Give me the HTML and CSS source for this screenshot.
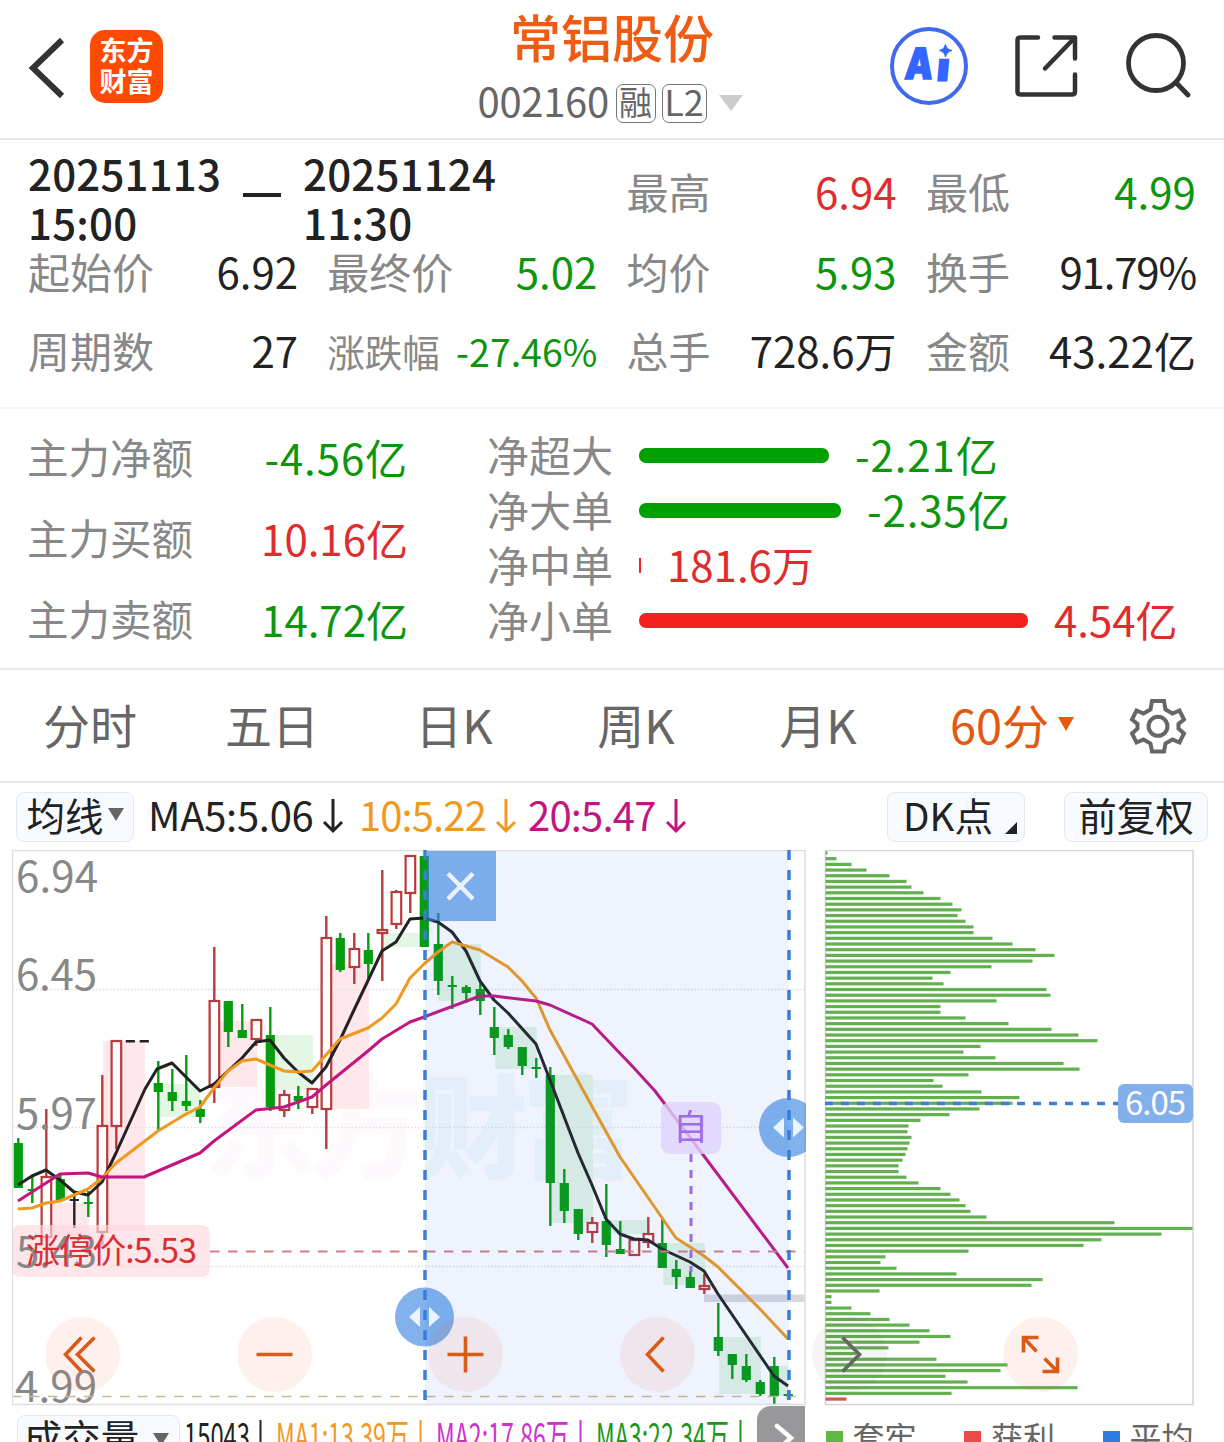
FILE: index.html
```html
<!DOCTYPE html>
<html lang="zh-CN">
<head>
    <meta charset="UTF-8">
    <meta name="viewport" content="width=device-width, initial-scale=1.0">
    <title>常铝股份 002160</title>
    <link rel="stylesheet" href="styles.css">
</head>
<body>
    <header class="topbar">
        <div class="left">
            <svg class="back" width="40" height="64" viewBox="0 0 40 64"><path d="M35 5 L6 33 L35 61" fill="none" stroke="#333" stroke-width="6"/></svg>
            <div class="logo"><span>东方</span><span>财富</span></div>
        </div>
        <div class="title">
            <h1>常铝股份</h1>
            <div class="code">
                <span class="num">002160</span>
                <span class="tag">融</span>
                <span class="tag l2">L2</span>
                <i class="tri"></i>
            </div>
        </div>
        <div class="icons">
            <svg width="80" height="80" viewBox="889 26.5 80 80">
                <circle cx="929" cy="66.5" r="37" fill="none" stroke="#4169ee" stroke-width="4"/>
                <g class="ai" fill="#3366ff" stroke="#3366ff" transform="translate(929 0) skewX(-5) translate(-929 0)">
                    <text x="911" y="80" textLength="28" lengthAdjust="spacingAndGlyphs">A</text>
                    <text x="944" y="81">ı</text>
                </g>
                <path d="M945.500 45 Q946.500 50 952 51 Q946.500 52 945.500 57.500 Q944.500 52 939.500 51 Q944.500 50 945.500 45Z" fill="#3366ff" stroke="#3366ff"/>
            </svg>
            <svg width="66" height="66" viewBox="1013 33.500 66 66" fill="none" stroke="#333" stroke-width="4.500" stroke-linecap="round" stroke-linejoin="round">
                <path d="M1038 38 H1020 Q1017.500 38 1017.500 41 V92 Q1017.500 95 1020.500 95 H1072 Q1075 95 1075 92 V75"/>
                <path d="M1054.500 38 H1075 V59 M1074 39 L1045 69"/>
            </svg>
            <svg width="70" height="70" viewBox="1124 31.500 70 70" fill="none" stroke="#333" stroke-width="4.800" stroke-linecap="round">
                <circle cx="1157" cy="63.500" r="27.500"/>
                <path d="M1177 83 L1189 95.500"/>
            </svg>
        </div>
    </header>

    <section class="stats">
        <div class="range">
            <div>20251113<br>15:00</div>
            <i></i>
            <div>20251124<br>11:30</div>
        </div>
        <div class="cell"><span>最高</span><b class="red">6.94</b></div>
        <div class="cell"><span>最低</span><b class="green">4.99</b></div>
        <div class="cell"><span>起始价</span><b>6.92</b></div>
        <div class="cell"><span>最终价</span><b class="green">5.02</b></div>
        <div class="cell"><span>均价</span><b class="green">5.93</b></div>
        <div class="cell"><span>换手</span><b class="tight">91.79%</b></div>
        <div class="cell"><span>周期数</span><b>27</b></div>
        <div class="cell small"><span>涨跌幅</span><b class="green">-27.46%</b></div>
        <div class="cell"><span>总手</span><b>728.6万</b></div>
        <div class="cell"><span>金额</span><b>43.22亿</b></div>
    </section>

    <section class="funds">
        <div class="main-force">
            <div class="cell"><span>主力净额</span><b class="green neg">-4.56亿</b></div>
            <div class="cell"><span>主力买额</span><b class="red">10.16亿</b></div>
            <div class="cell"><span>主力卖额</span><b class="green">14.72亿</b></div>
        </div>
        <div class="orders">
            <div class="order green"><span>净超大</span><i style="width:190px"></i><b class="neg">-2.21亿</b></div>
            <div class="order green"><span>净大单</span><i style="width:202px"></i><b class="neg">-2.35亿</b></div>
            <div class="order red"><span>净中单</span><i class="thin" style="width:2px"></i><b>181.6万</b></div>
            <div class="order red"><span>净小单</span><i style="width:389px"></i><b>4.54亿</b></div>
        </div>
    </section>

    <nav class="tabs">
        <a>分时</a>
        <a>五日</a>
        <a>日K</a>
        <a>周K</a>
        <a>月K</a>
        <a class="active">60分<i></i></a>
        <svg width="60" height="60" viewBox="1128 695 60 60" fill="none" stroke="#666" stroke-width="4">
            <path d="M1152 700 H1164 L1165.500 708.500 L1172.500 712.500 L1179.500 709.500 L1184 718.500 L1178.500 723 V727.500 L1184 732.500 L1179.500 741.500 L1172.500 738.500 L1165.500 742.500 L1164 750.500 H1152 L1150.500 742.500 L1143.500 738.500 L1136.500 741.500 L1132 732.500 L1137.500 727.500 V723 L1132 718.500 L1136.500 709.500 L1143.500 712.500 L1150.500 708.500 Z"/>
            <circle cx="1158" cy="725.300" r="9.500"/>
        </svg>
    </nav>

    <div class="toolbar">
        <div class="pill">均线<i class="down"></i></div>
        <div class="ma ma5">MA5:5.06<svg width="22" height="36" viewBox="0 0 22 36"><path d="M11 1 V33 M2 24 L11 33 L20 24"/></svg></div>
        <div class="ma ma10">10:5.22<svg width="22" height="36" viewBox="0 0 22 36"><path d="M11 1 V33 M2 24 L11 33 L20 24"/></svg></div>
        <div class="ma ma20">20:5.47<svg width="22" height="36" viewBox="0 0 22 36"><path d="M11 1 V33 M2 24 L11 33 L20 24"/></svg></div>
        <div class="pill dk">DK点<i class="corner"></i></div>
        <div class="pill fq">前复权</div>
    </div>

    <div class="charts">
        <svg id="kline" width="794" height="556" viewBox="12 850 794 556">
            <text class="watermark" x="204" y="1170" textLength="430">东方<tspan>财富</tspan></text>
            <g id="blocks"></g>
            <g class="grid">
                <path d="M12 989.500 H805 M12 1127.500 H805 M12 1266.500 H805"/>
            </g>
            <g id="candles"></g>
            <rect x="704" y="1294.500" width="101" height="7.500" fill="#d8d8df"/>
            <rect x="12" y="1225" width="198" height="52" rx="8" fill="#ffd9df" fill-opacity=".65"/>
            <g class="axis">
                <text x="16" y="892" textLength="82">6.94</text>
                <text x="16" y="990" textLength="81">6.45</text>
                <text x="16" y="1129" textLength="81">5.97</text>
                <text x="16" y="1267" textLength="81">5.43</text>
                <text x="15" y="1402" textLength="82">4.99</text>
            </g>
            <g id="lines"></g>
            <path d="M210 1251.500 H805" stroke="#cf7f85" stroke-width="2" stroke-dasharray="9.500 8.500"/>
            <path d="M12 1396.500 H805" stroke="#cdb791" stroke-width="1.500" stroke-dasharray="9.500 8.500"/>
            <text class="limit" x="26" y="1263" textLength="171">涨停价:5.53</text>
            <rect x="425" y="850" width="364" height="555" fill="#3c70f5" fill-opacity=".085"/>
            <rect x="661" y="1102" width="60" height="52" rx="9" fill="#dfd3fb" fill-opacity=".8"/>
            <text class="zi" x="673" y="1140">自</text>
            <path d="M691 1154 V1272" stroke="#9d6ae4" stroke-width="3" stroke-dasharray="8 8"/>
            <path d="M12.500 850.500 H805 V1404.500 H12.500 Z" fill="none" stroke="#dedede" stroke-width="1.500"/>
            <rect x="427" y="851" width="69" height="70" fill="#2f7de0" fill-opacity=".6"/>
            <path d="M448 873.500 L473 899 M473 873.500 L448 899" stroke="#eaf2ff" stroke-width="4.500"/>
            <g id="handles"></g>
        </svg>
        <svg id="chips" width="370" height="556" viewBox="824 850 370 556">
            <path d="M825.500 850.500 H1193 V1404.500 H825.500 Z" fill="none" stroke="#d3d3d3" stroke-width="1.500"/>
            <g id="bars"></g>
            <path d="M825 1103.500 H1118" stroke="#3f7fd0" stroke-width="3.500" stroke-dasharray="8 8"/>
            <rect x="1118" y="1084" width="75" height="39" rx="6" fill="#83b0eb"/>
            <text class="avg" x="1125" y="1115" textLength="61">6.05</text>
        </svg>
        <div class="controls">
            <svg viewBox="-37.500 -37.500 75 75"><circle r="37.500"/><path d="M-1 -17 L-17 0 L-1 17 M12 -17 L-5 0 L12 17"/></svg>
            <svg viewBox="-37.500 -37.500 75 75"><circle r="37.500"/><path d="M-18 0 H18"/></svg>
            <svg viewBox="-37.500 -37.500 75 75"><circle r="37.500"/><path d="M-18 0 H18 M0 -18 V18"/></svg>
            <svg viewBox="-37.500 -37.500 75 75"><circle r="37.500"/><path d="M6 -17 L-10 0 L6 17"/></svg>
            <svg class="off" viewBox="-37.500 -37.500 75 75"><circle r="37.500"/><path d="M-7 -17 L10 0 L-7 17"/></svg>
            <svg viewBox="-37.500 -37.500 75 75"><circle r="37.500"/><path d="M-17 -2 V-17 H-2 M-17 -17 L-4 -3 M17 3 V17 H2 M17 17 L4 4"/></svg>
        </div>
    </div>

    <footer>
        <div class="pill vol">成交量<i class="down"></i></div>
        <svg class="vol-ma" width="572" height="37" viewBox="185 1405 572 37">
            <g fill="#222"><text x="184" y="1450" textLength="66" lengthAdjust="spacingAndGlyphs">15043</text><path d="M259.500 1419h2v23h-2z"/></g>
            <g fill="#ef9a26"><text x="276" y="1450" textLength="133" lengthAdjust="spacingAndGlyphs">MA1:13.39万</text><path d="M419.500 1419h2v23h-2z"/></g>
            <g fill="#cc33cc"><text x="436" y="1450" textLength="133" lengthAdjust="spacingAndGlyphs">MA2:17.86万</text><path d="M579.500 1419h2v23h-2z"/></g>
            <g fill="#1a971a"><text x="596" y="1450" textLength="133" lengthAdjust="spacingAndGlyphs">MA3:22.34万</text><path d="M739.500 1419h2v23h-2z"/></g>
        </svg>
        <div class="next"><svg width="24" height="36" viewBox="0 0 24 36"><path d="M6 20 L20 32 L6 44" fill="none" stroke="#fff" stroke-width="4.500" stroke-linecap="round"/></svg></div>
        <div class="legend">
            <span><i class="g"></i>套牢</span>
            <span><i class="r"></i>获利</span>
            <span><i class="b"></i>平均</span>
        </div>
    </footer>

    <script>
        const RED = "#b93a3a", GREEN = "#069c10", BLACK = "#222";

        // [最高, 最低, 实体上沿, 实体下沿, 类型]  g 跌, r 涨, k 平
        const candles = [
            [1138,1188,1143,1188,"g"],[1177,1203,1189,1191,"g"],[1109,1237,1177,1237,"r"],[1174,1200,1179,1200,"g"],
            [1192,1228,1199,1201,"k"],[1191,1217,1202,1204,"g"],[1075,1245,1126,1232,"r"],[1040,1149,1041,1126,"r"],
            [1041,1041,1040,1042.5,"k"],[1041,1041,1040,1042.5,"k"],[1061,1131,1083,1092,"g"],[1069,1111,1092,1101,"g"],
            [1055,1111,1101,1106,"g"],[1100,1123,1109,1117,"g"],[947,1103,1001,1087,"r"],[1001,1047,1001,1032,"g"],
            [1004,1038,1030,1038,"g"],[1020,1046,1020,1039,"r"],[1007,1111,1035,1107,"g"],[1090,1117,1095,1110,"r"],
            [1086,1109,1096,1101,"g"],[1089,1114,1089,1107,"r"],[916,1149,938,1109,"r"],[933,972,938,970,"g"],
            [933,984,949,967,"r"],[933,978,950,964,"g"],[870,981,930,933,"r"],[890,929,892,924,"r"],
            [855,913,856,893,"r"],[856,946,856,947,"g"],[913,995,944,981,"g"],[976,1009,985,987,"g"],
            [985,1003,987,993,"g"],[982,1015,989,1001,"g"],[1007,1055,1027,1038,"g"],[1029,1049,1035,1047,"g"],
            [1047,1075,1047,1066,"g"],[1058,1078,1067,1069,"g"],[1067,1226,1075,1183,"g"],[1169,1223,1183,1211,"g"],
            [1209,1240,1209,1234,"g"],[1217,1243,1223,1232,"r"],[1184,1257,1221,1245,"g"],[1221,1254,1249,1254,"g"],
            [1240,1255,1240,1255,"r"],[1217,1248,1234,1242,"r"],[1218,1268,1243,1268,"g"],[1260,1289,1269,1277,"g"],
            [1271,1288,1277,1288,"g"],[1274,1294,1286,1289,"r"],[1303,1356,1337,1351,"g"],[1354,1379,1354,1365,"g"],
            [1354,1382,1366,1380,"g"],[1380,1396,1382,1394,"g"],[1357,1405,1366,1396,"g"],[1390,1400,1394,1396,"g"]
        ];

        let html = "";
        candles.forEach(([high, low, top, bottom, type], i) => {
            const x = 18.3 + i * 14;
            const color = type == "r" ? RED : type == "g" ? GREEN : BLACK;
            if (type == "r") {
                html += `<path d="M${x} ${high} V${top} M${x} ${bottom} V${low}" stroke="${color}" stroke-width="2.4"/>`;
                html += `<rect x="${x - 4.7}" y="${top}" width="9.6" height="${bottom - top}" fill="#fff" fill-opacity=".85" stroke="${color}" stroke-width="2.2"/>`;
            } else {
                html += `<path d="M${x} ${high} V${low}" stroke="${color}" stroke-width="2.4"/>`;
                html += `<rect x="${x - 4.6}" y="${top}" width="9.2" height="${bottom - top}" fill="${color}"/>`;
            }
        });
        document.getElementById("candles").innerHTML = html;

        // 背景色块 [x1, y1, x2, y2, 颜色]
        const P = "#ffe8ec", G = "#e4f6e4";
        const blocks = [
            [50,1203,89,1237,P],[103,1041,145,1231,P],[158,1084,200,1117,G],[214,1021,257,1087,P],[270,1035,313,1090,G],
            [326,964,369,1109,P],[382,933,424,947,G],[438,944,481,1001,G],[495,1027,537,1069,G],[550,1075,593,1223,G],
            [606,1220,648,1234,G],[663,1243,705,1285,G],[719,1337,761,1394,G],[774,1366,788,1396,G]
        ];
        document.getElementById("blocks").innerHTML = blocks.map(([a, b, c, d, color]) =>
            `<rect x="${a}" y="${b}" width="${c - a}" height="${d - b}" fill="${color}"/>`).join("");

        // 均线
        const lines = {
            "#222": "18,1185 32,1176 46,1170 60,1180 74,1192 88,1195 102,1182 116,1153 145,1089 157,1069 172,1063 186,1077 200,1091 214,1084 228,1071 242,1058 256,1042 270,1040 284,1058 298,1072 312,1083 326,1067 340,1040 354,1010 382,951 396,942 410,919 424,918 438,922 452,932 466,951 480,981 494,1000 508,1013 536,1044 550,1080 578,1153 592,1185 606,1219 620,1234 634,1239 648,1240 662,1249 690,1262 704,1271 718,1294 774,1376 788,1386",
            "#ef9a1f": "18,1209 32,1208 46,1203 60,1201 74,1195 88,1189 102,1178 116,1163 158,1131 186,1114 200,1107 214,1088 228,1071 242,1061 256,1059 284,1071 298,1072 312,1071 326,1055 340,1039 368,1028 382,1018 396,1004 410,978 424,964 438,952 452,942 480,950 508,967 522,981 536,998 550,1030 594,1110 620,1157 676,1238 704,1256 718,1267 760,1309 788,1339",
            "#c3157f": "18,1201 46,1183 60,1174 88,1173 102,1177 144,1177 158,1171 200,1153 214,1141 256,1110 284,1107 312,1097 326,1085 368,1051 382,1039 410,1022 424,1017 480,996 494,996 536,1001 550,1005 592,1024 634,1068 655,1091 692,1140 788,1268"
        };
        document.getElementById("lines").innerHTML = Object.entries(lines).map(([color, points]) =>
            `<polyline points="${points}" fill="none" stroke="${color}" stroke-width="3" stroke-linejoin="round"/>`).join("");

        // 区间手柄
        document.getElementById("handles").innerHTML = [[425, 1317], [789, 1127.5]].map(([x, y]) =>
            `<circle cx="${x - 0.5}" cy="${y}" r="29.500" fill="#2f7de0" fill-opacity=".6"/>
            <path d="M${x - 16} ${y} l11 -10 v20z M${x + 15} ${y} l-11 -10 v20z" fill="#eaf4ff"/>
            <path d="M${x} 850 V1404" stroke="#3a7fd3" stroke-width="3.500" stroke-dasharray="10 10"/>`).join("");

        // 筹码分布
        const chips = [2,11,26,41,64,81,86,98,115,127,136,132,140,148,148,167,187,210,229,207,166,125,107,118,221,225,171,115,115,140,
            183,226,253,272,155,138,170,238,254,143,108,117,156,194,187,154,124,95,83,82,86,84,82,80,77,73,73,81,93,115,
            125,134,140,145,161,289,367,336,276,258,143,60,55,71,131,217,206,54,6,6,26,45,64,84,104,125,94,63,
            31,111,182,175,120,142,252,126,21];
        document.getElementById("bars").innerHTML = chips.map((w, i) =>
            `<rect x="825.500" y="${851.4 + i * 5.688}" width="${w}" height="3.200" fill="${i == 96 ? "#d65555" : "#62b04f"}"/>`).join("");
    </script>
</body>
</html>
```
FILE: styles.css
```css
* {
    box-sizing: border-box;
}
body {
    margin: 0;
    width: 1224px;
    height: 1442px;
    overflow: hidden;
    background: #fff;
    color: #222;
    font-family: "Noto Sans CJK SC", sans-serif;
    font-size: 42px;
    line-height: 1;
}
i {
    display: block;
    font-style: normal;
}
b {
    font-weight: 400;
}
svg {
    display: block;
    flex: none;
}
.red {
    color: #df2c2c;
}
.green {
    color: #0c960c;
}
.tight {
    letter-spacing: -1.200px;
}
.neg {
    letter-spacing: 0.900px;
}

/* 顶部 */
.topbar {
    display: grid;
    grid-template-columns: 1fr 270px 1fr;
    height: 140px;
    border-bottom: 2px solid #e8e8e8;
}
.left {
    display: flex;
    align-items: center;
    padding: 0 0 5px 27px;
}
.logo {
    display: flex;
    flex-direction: column;
    justify-content: center;
    align-items: center;
    width: 73px;
    height: 73px;
    margin-left: 23px;
    padding-bottom: 3px;
    border-radius: 15px;
    background: #ff4a05;
    color: #fff;
    font-size: 27px;
    font-weight: 700;
    line-height: 31px;
}
.title {
    display: flex;
    flex-direction: column;
    align-items: center;
}
.title h1 {
    margin: 0;
    padding-top: 3px;
    color: #ee5b12;
    font-size: 51px;
    font-weight: 500;
    line-height: 66px;
}
.code {
    display: flex;
    align-items: center;
    height: 40px;
    margin-top: 14px;
    color: #666;
    margin-left: -4px;
}
.code .num {
    width: 138px;
    margin-bottom: 6px;
    font-size: 40px;
    letter-spacing: -0.300px;
}
.tag {
    width: 40px;
    height: 39px;
    margin-right: 6px;
    border: 1.500px solid #777;
    border-radius: 7px;
    font-size: 33px;
    line-height: 32px;
    text-align: center;
}
.tag.l2 {
    width: 45px;
    font-size: 36px;
    line-height: 31px;
}
.tri {
    margin-left: 6px;
    border: 12px solid transparent;
    border-top: 16px solid #ccc;
    border-bottom: 0;
}
.icons {
    display: flex;
    align-items: center;
    justify-content: flex-end;
    padding: 0 31px 6px 0;
    gap: 44px;
}
.ai text {
    font-family: "Inter", sans-serif;
    font-size: 43px;
    font-weight: 900;
    stroke-width: 1.500;
}
.ai text + text {
    font-size: 36px;
    stroke-width: 3;
}

/* 区间统计 */
.stats {
    display: grid;
    grid-template-columns: repeat(4, 270px);
    grid-template-rows: repeat(3, 79.500px);
    column-gap: 29.300px;
    height: 269px;
    padding: 13px 28px 0;
    border-bottom: 2px solid #f5f5f5;
}
.range {
    grid-column: span 2;
    display: flex;
    height: 98px;
    margin-top: -5px;
    font-weight: 500;
    line-height: 49px;
    letter-spacing: 0.200px;
}
.range i {
    width: 38px;
    height: 4px;
    margin: 45px 22px 0 23px;
    background: #222;
}
.range div {
    width: 192px;
}
.cell {
    display: flex;
    align-items: center;
    justify-content: space-between;
    padding-bottom: 3px;
    white-space: nowrap;
}
.cell span {
    color: #888;
}
.cell.small {
    font-size: 37.500px;
}

/* 资金 */
.funds {
    display: flex;
    height: 261px;
    border-bottom: 2px solid #e8eaec;
}
.main-force {
    width: 408px;
    padding: 9px 0 0 27px;
}
.main-force .cell {
    height: 81px;
}
.main-force span {
    font-size: 41.500px;
}
.orders {
    padding: 19px 0 0 79px;
}
.order {
    display: flex;
    align-items: center;
    height: 55px;
    white-space: nowrap;
}
.order span {
    width: 152px;
    margin-bottom: 3px;
    color: #888;
}
.order b {
    margin-bottom: 3px;
}
.order i {
    height: 15px;
    margin-right: 26px;
    border-radius: 7px;
    background: #00a000;
}
.order.red i {
    background: #f52020;
}
.order i.thin {
    border-radius: 0;
}

/* 周期 */
.tabs {
    display: flex;
    align-items: center;
    height: 113px;
    border-bottom: 2px solid #e8e8e8;
    color: #666;
    font-size: 47px;
}
.tabs a {
    width: 182px;
    padding: 0 2px 4px 0;
    text-align: center;
}
.tabs a.active {
    display: flex;
    align-items: center;
    justify-content: center;
    width: 204px;
    margin-right: 14px;
    padding-right: 0;
    color: #e2590f;
}
.tabs a.active i {
    margin-left: 9px;
    border: 8px solid transparent;
    border-top: 14px solid #e9560c;
    border-bottom: 0;
}

/* 指标栏 */
.toolbar {
    display: flex;
    align-items: center;
    height: 67px;
    padding: 0 16px;
    font-size: 40px;
}
.pill {
    display: flex;
    align-items: center;
    justify-content: center;
    width: 118px;
    height: 50px;
    padding-bottom: 4px;
    border: 1.500px solid #e6e8f0;
    border-radius: 8px;
    background: #f7faff;
    font-size: 38.500px;
}
.pill .down {
    margin-left: 4px;
    border: 8px solid transparent;
    border-top: 13px solid #666;
    border-bottom: 0;
}
.ma {
    display: flex;
    align-items: center;
    height: 50px;
    padding-bottom: 5px;
}
.ma svg {
    margin: 3px 0 0 9px;
    fill: none;
    stroke: currentColor;
    stroke-width: 3;
}
.ma5 {
    width: 211px;
    margin-left: 14px;
    letter-spacing: -0.300px;
}
.ma10 {
    width: 169px;
    color: #ef9a1f;
    letter-spacing: -0.900px;
}
.ma20 {
    color: #c3157f;
    letter-spacing: -0.800px;
}
.pill.dk {
    position: relative;
    width: 138px;
    margin-left: auto;
    padding-right: 16px;
}
.corner {
    position: absolute;
    right: 7px;
    bottom: 7px;
    border-left: 12px solid transparent;
    border-bottom: 12px solid #222;
}
.pill.fq {
    width: 144px;
    margin-left: 39px;
}

/* 图表 */
.charts {
    position: relative;
    display: flex;
    gap: 18px;
    height: 556px;
    padding-left: 12px;
}
.watermark {
    font-size: 112px;
    font-weight: 900;
    fill: #fef9fd;
}
.watermark tspan {
    fill: #f5faf9;
}
.grid path {
    fill: none;
    stroke: #ddd;
    stroke-width: 1.500;
    stroke-dasharray: 1.500 2;
}
.axis text {
    font-size: 42px;
    fill: #888;
}
.limit {
    font-size: 34px;
    fill: #da2f35;
}
.zi {
    font-size: 35px;
    fill: #a06ae8;
}
.avg {
    font-size: 33px;
    fill: #fff;
}
.controls {
    position: absolute;
    left: 45px;
    top: 467px;
    display: flex;
    gap: 116.700px;
}
.controls svg {
    width: 75px;
    height: 75px;
}
.controls circle {
    fill: #f9693a;
    fill-opacity: 0.09;
}
.controls path {
    fill: none;
    stroke: #da5b17;
    stroke-width: 3.600;
}
.controls .off circle {
    fill: #704060;
    fill-opacity: 0.06;
}
.controls .off path {
    stroke: #666;
}

/* 底部 */
footer {
    display: flex;
    height: 36px;
    padding-left: 17px;
    overflow: hidden;
}
.pill.vol {
    flex: none;
    width: 163px;
    height: 50px;
    margin-top: 9px;
    padding: 0 4px 7px 0;
}
.pill.vol .down {
    margin: 5px 0 0 14px;
}
.vol-ma {
    margin-left: 5px;
    font-size: 38px;
}
.next {
    width: 48px;
    height: 50px;
    padding-left: 14px;
    border-radius: 14px 0 0 0;
    background: #98979a;
}
.legend {
    display: flex;
    gap: 48.500px;
    margin: 10px 0 0 20.500px;
    color: #666;
    font-size: 32px;
    line-height: 40px;
    white-space: nowrap;
}
.legend span {
    display: flex;
    width: 90px;
}
.legend i {
    flex: none;
    width: 17px;
    height: 17px;
    margin: 15px 10px 0 0;
}
.legend .g {
    background: #5cb83f;
}
.legend .r {
    background: #ee4848;
}
.legend .b {
    background: #2f7de0;
}
```
